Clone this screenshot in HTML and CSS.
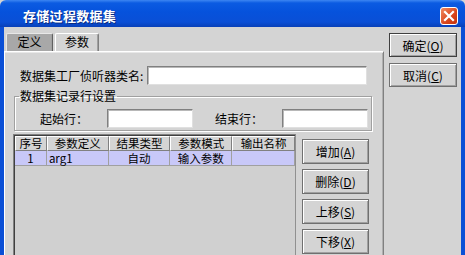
FILE: index.html
```html
<!DOCTYPE html>
<html>
<head>
<meta charset="utf-8">
<link rel="stylesheet" href="styles.css">
</head>
<body>
<div class="window">
  <div class="titlebar">
    <span class="title">存储过程数据集</span>
    <span class="close"><svg width="18" height="18" viewBox="0 0 18 18"><path d="M5 5 L13 13 M13 5 L5 13" stroke="#fff" stroke-width="2.2" stroke-linecap="square"/></svg></span>
  </div>
  <div class="frame">
    <div class="main">
      <div class="tabs">
        <div class="tab active">定义</div>
        <div class="tab">参数</div>
      </div>
      <div class="panel">
        <div class="row1">
          <span class="lbl1">数据集工厂侦听器类名:</span>
          <span class="input wide"></span>
        </div>
        <fieldset class="group">
          <legend>数据集记录行设置</legend>
          <div class="grow">
            <span class="lbl2">起始行：</span>
            <span class="input small"></span>
            <span class="lbl3">结束行：</span>
            <span class="input small"></span>
          </div>
        </fieldset>
        <div class="tablearea">
          <div class="grid">
            <div class="hrow">
              <div class="hc c1">序号</div>
              <div class="hc c2">参数定义</div>
              <div class="hc c3">结果类型</div>
              <div class="hc c4">参数模式</div>
              <div class="hc c5">输出名称</div>
            </div>
            <div class="drow">
              <div class="dc c1 center">1</div>
              <div class="dc c2">arg1</div>
              <div class="dc c3 center">自动</div>
              <div class="dc c4 center">输入参数</div>
              <div class="dc c5"></div>
            </div>
          </div>
          <div class="sidebtns">
            <div class="btn tbtn">增加(<u>A</u>)</div>
            <div class="btn tbtn">删除(<u>D</u>)</div>
            <div class="btn tbtn">上移(<u>S</u>)</div>
            <div class="btn tbtn">下移(<u>X</u>)</div>
          </div>
        </div>
      </div>
    </div>
    <div class="side">
      <div class="btn sbtn def">确定(<u>O</u>)</div>
      <div class="btn sbtn">取消(<u>C</u>)</div>
    </div>
  </div>
</div>
</body>
</html>
```

FILE: styles.css
```css
* { box-sizing: border-box; }
html, body {
  margin: 0;
  padding: 0;
  width: 465px;
  height: 255px;
  overflow: hidden;
  background: #d4d4d4;
  font-family: "Noto Sans CJK SC", "Liberation Sans", sans-serif;
  font-size: 12px;
  color: #000;
}
.window {
  width: 465px;
  height: 255px;
  display: flex;
  flex-direction: column;
}
.titlebar {
  height: 27px;
  flex: none;
  display: flex;
  align-items: center;
  padding: 0 6px 0 23px;
  background: linear-gradient(#3d86f2 0px, #0b5be2 3px, #0652dc 12px, #0a4fd6 22px, #0840b8 27px);
  border-radius: 6px 6px 0 0;
}
.title {
  color: #fff;
  font-weight: bold;
  font-size: 13px;
  letter-spacing: 0.3px;
  text-shadow: 1px 1px 0 #0a2a80;
  flex: 1;
  margin-top: 3px;
}
.close {
  width: 18px;
  height: 18px;
  margin-top: 5px;
  margin-right: 1px;
  border: 1px solid #fff;
  border-radius: 3px;
  background: linear-gradient(135deg, #f08a60, #d9451c 60%, #c4300c);
  display: flex;
}
.close svg { display: block; margin: -1px; }
.frame {
  flex: 1;
  display: flex;
  border-left: 4px solid #0a4fd6;
  border-right: 4px solid #0a4fd6;
  min-height: 0;
}
.main {
  width: 380px;
  flex: none;
  display: flex;
  flex-direction: column;
}
.tabs {
  display: flex;
  gap: 2px;
  padding: 5px 0 0 2px;
  height: 24px;
  align-items: flex-end;
}
.tab {
  height: 18px;
  width: 44px;
  text-align: center;
  line-height: 16px;
  border: 1px solid #808080;
  border-top-color: #ffffff;
  border-left-color: #ffffff;
  border-bottom: none;
  border-radius: 2px 2px 0 0;
  background: #d4d4d4;
  box-shadow: inset -1px 0 0 #a0a0a0;
}
.tab.active {
  width: 47px;
  background: #a8a8a8;
  border-color: #e8e8e8 #606060 #606060 #e8e8e8;
}
.panel {
  flex: 1;
  border-top: 1px solid #ffffff;
  border-left: 1px solid #ffffff;
  border-right: 1px solid #808080;
  box-shadow: inset 0 1px 0 #e8e8e8, inset -1px 0 0 #b0b0b0;
  padding: 14px 0 0 0;
  display: flex;
  flex-direction: column;
  min-height: 0;
}
.row1 {
  display: flex;
  align-items: center;
  height: 19px;
  padding-left: 15px;
}
.lbl1 { width: 127px; }
.input {
  display: block;
  height: 19px;
  background: #fff;
  border: 1px solid #808080;
  border-right-color: #e0e0e0;
  border-bottom-color: #e0e0e0;
  box-shadow: inset 1px 1px 0 #b8b8b8;
}
.wide { width: 220px; }
.small { width: 86px; }
.group {
  margin: 4px 0 0 9px;
  width: 358px;
  padding: 0 0 2px 0;
  border: 1px solid #a0a0a0;
  box-shadow: 1px 1px 0 #fff, inset 1px 1px 0 #fff;
  min-inline-size: 0;
}
.group legend {
  padding: 0 1px;
  margin-left: 4px;
  line-height: 14px;
  height: 14px;
}
.grow {
  display: flex;
  align-items: center;
  height: 19px;
  margin-top: 6px;
  padding-left: 25px;
}
.lbl2 { width: 67px; }
.lbl3 { width: 67px; margin-left: 22px; }
.tablearea {
  margin-top: 3px;
  flex: 1;
  display: flex;
  min-height: 0;
  padding-left: 8px;
}
.grid {
  width: 283px;
  height: 130px;
  background: #d0d0d0;
  border-left: 1px solid #808080;
  border-top: 1px solid #808080;
  border-right: 1px solid #909090;
  box-shadow: inset 1px 1px 0 #404040;
  padding: 1px 0 0 1px;
}
.hrow, .drow { display: flex; height: 15px; }
.hc, .dc {
  height: 15px;
  font-size: 11.5px;
  line-height: 13px;
  white-space: nowrap;
}
.hc {
  text-align: center;
  background: #d4d4d4;
  border-top: 1px solid #fff;
  border-left: 1px solid #fff;
  border-right: 1px solid #808080;
  border-bottom: 1px solid #808080;
}
.dc {
  background: #c8c8f8;
  border-right: 1px solid #a0a0a0;
  border-bottom: 1px solid #a0a0a0;
  padding-left: 2px;
  line-height: 14px;
}
.center { text-align: center; padding-left: 0; }
.c1 { width: 32px; }
.c2 { width: 62px; }
.c3 { width: 62px; }
.c4 { width: 62px; }
.c5 { width: 63px; }
.sidebtns {
  margin: 5px 0 0 6px;
  display: flex;
  flex-direction: column;
  gap: 5px;
}
.btn {
  display: flex;
  align-items: center;
  justify-content: center;
  background: #d4d4d4;
  border: 1px solid #707070;
  box-shadow: inset 1px 1px 0 #fff, inset -1px -1px 0 #a0a0a0;
  white-space: nowrap;
}
.btn u { text-decoration: underline; }
.tbtn { width: 67px; height: 25px; }
.side {
  flex: 1;
  padding: 6px 0 0 5px;
  display: flex;
  flex-direction: column;
  gap: 6px;
}
.sbtn { width: 68px; height: 24px; }
.def { border-color: #404040; }
```
